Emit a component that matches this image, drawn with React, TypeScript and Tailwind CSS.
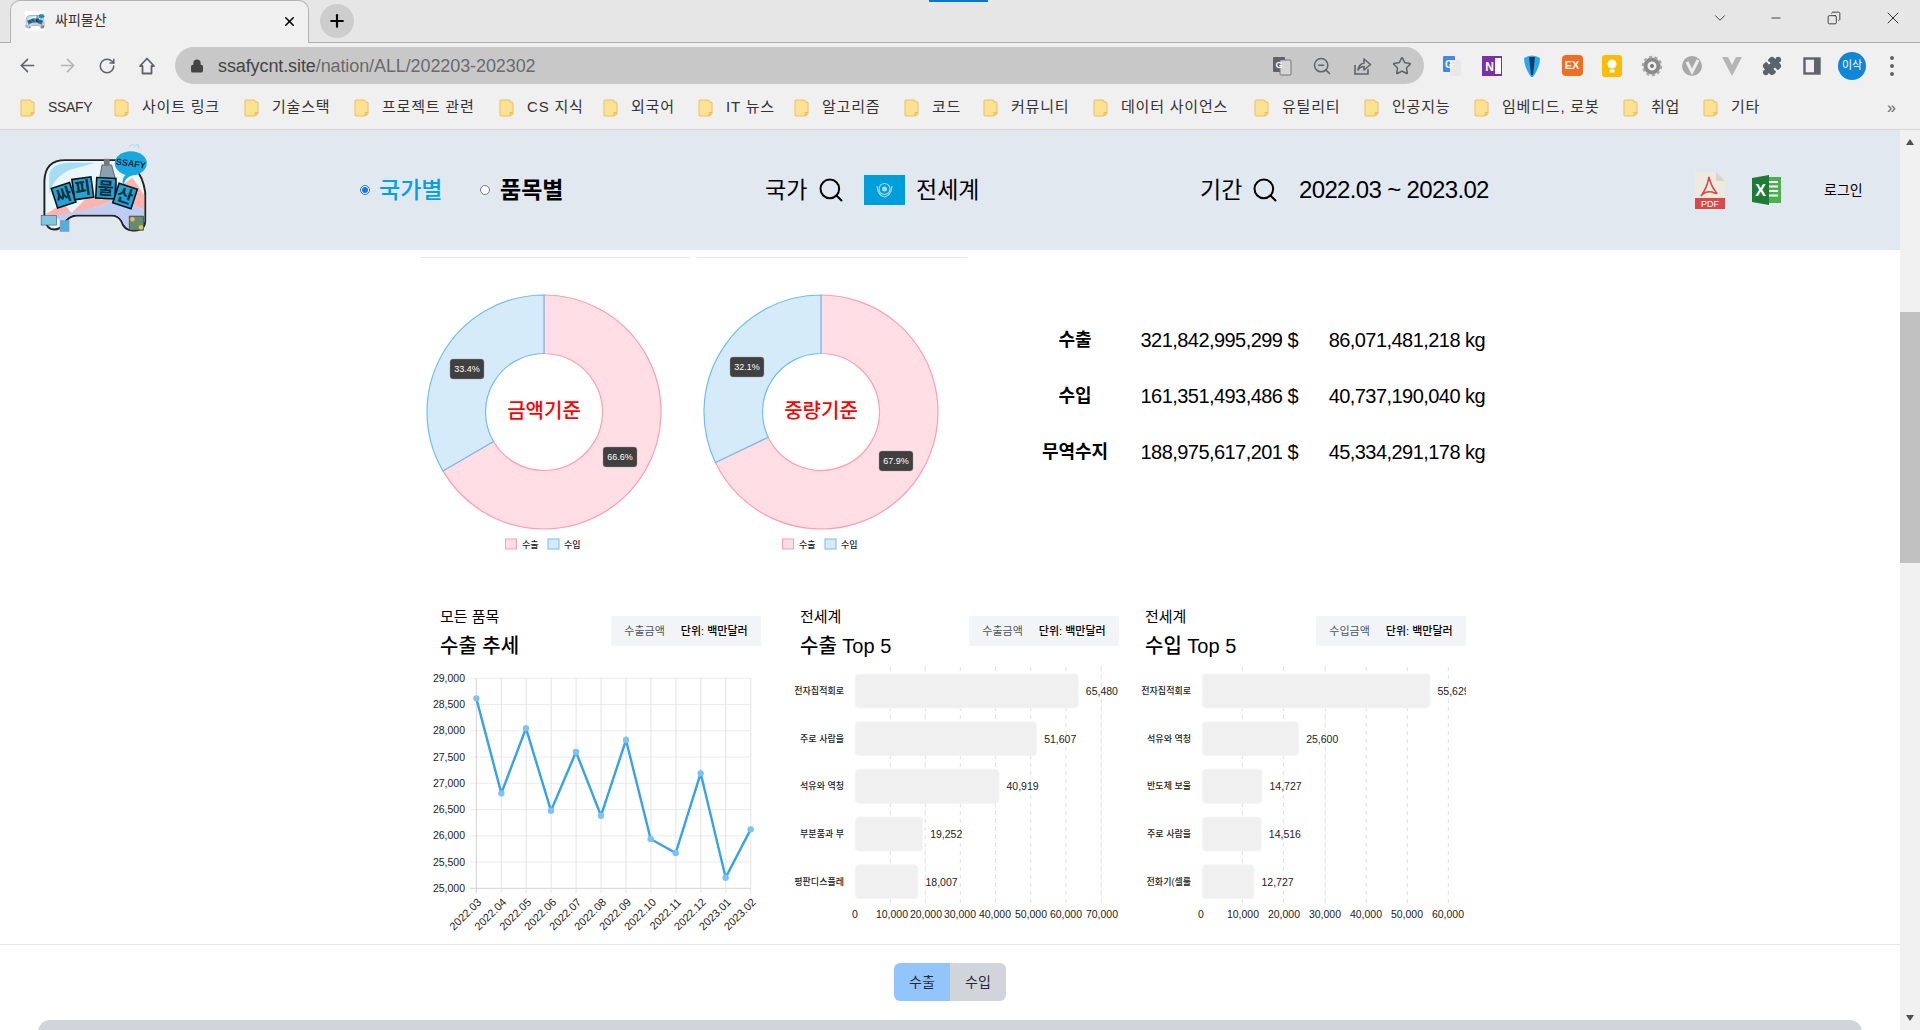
import React from "react";
import { ArrowLeft, ArrowRight, RotateCw, Lock, ZoomOut, Star, Puzzle, Search, Plus, X, ChevronDown, Minus, Copy } from "lucide-react";

const Logo = ({ className }: { className: string }) => (
  <svg viewBox="50 20 350 290" className={className}>
    <path d="M70 240 V135 Q72 70 135 70 H290 Q370 72 385 170 V260 Q385 290 345 290 Q320 290 310 260 Q300 243 280 243 H170 Q145 245 130 270 Q115 292 90 285 Q70 275 70 240 Z" fill="#eaf6fb" stroke="#222" strokeWidth="6" />
    <path d="M85 110 Q100 80 140 78 H230 L150 100 Q95 125 85 180 Z" fill="#a5def2" />
    <path d="M72 240 L130 205 L155 235 L210 180 L250 195 L345 125 L382 180 V225 L300 190 L240 215 L150 240 L100 245 Z" fill="#fbb4b0" />
    <path d="M100 245 L150 235 L240 215 L300 190 L382 225 V262 Q380 285 345 285 Q325 285 312 258 Q300 240 280 240 H170 Q145 240 128 265 Z" fill="#bfcdf2" />
    <path d="M240 140 L250 85 H280 L295 140 V185 H240 Z" fill="#8ca0b4" stroke="#333" strokeWidth="2" />
    <rect x="256" y="66" width="18" height="20" fill="#777" />
    <ellipse cx="340" cy="80" rx="50" ry="38" fill="#19a7df" />
    <path d="M335 108 Q305 125 318 150 Q318 125 350 115 Z" fill="#19a7df" />
    <text x="340" y="90" fontSize="28" fontWeight="700" fill="#123" textAnchor="middle" transform="rotate(8 340 80)">SSAFY</text>
    <path d="M335 30 L345 18 L352 28 L362 20 L366 34" fill="none" stroke="#9fd8ee" strokeWidth="3" />
    {[["싸", 130, 180, -18], ["피", 190, 158, -8], ["물", 262, 158, 3], ["산", 322, 182, 18]].map(([t, x, y, r]) => (
      <g key={t as string} transform={`rotate(${r} ${x} ${y})`}>
        <rect x={(x as number) - 30} y={(y as number) - 32} width="60" height="64" fill="#1ea5d8" stroke="#111" strokeWidth="5" />
        <text x={x as number} y={(y as number) + 19} fontSize="54" fontWeight="700" textAnchor="middle" fill="#0b2a3a">{t}</text>
      </g>
    ))}
    <rect x="60" y="243" width="48" height="30" fill="#7fc8e0" stroke="#557" strokeWidth="2" />
    <rect x="118" y="258" width="30" height="36" fill="#5fa8d8" />
    <rect x="335" y="245" width="45" height="44" fill="#6a8a70" stroke="#333" strokeWidth="2" />
    <circle cx="345" cy="255" r="7" fill="#e6c04a" />
    <circle cx="372" cy="280" r="7" fill="#e6c04a" />
  </svg>
);

const bookmarks: [string, string][] = [
  ["SSAFY", "w-[94px]"],
  ["사이트 링크", "w-[130px]"],
  ["기술스택", "w-[110px]"],
  ["프로젝트 관련", "w-[145px]"],
  ["CS 지식", "w-[104px]"],
  ["외국어", "w-[95px]"],
  ["IT 뉴스", "w-[96px]"],
  ["알고리즘", "w-[110px]"],
  ["코드", "w-[79px]"],
  ["커뮤니티", "w-[110px]"],
  ["데이터 사이언스", "w-[161px]"],
  ["유틸리티", "w-[110px]"],
  ["인공지능", "w-[110px]"],
  ["임베디드, 로봇", "w-[149px]"],
  ["취업", "w-[80px]"],
  ["기타", "w-[80px]"],
];

const Folder = () => (
  <svg width="15" height="18" viewBox="0 0 15 18" className="shrink-0">
    <path d="M1 2 Q1 1 2 1 H10 Q11 1 11 2 V3 H13 Q14 3 14 4 V15 L11 17 H2 Q1 17 1 16 Z" fill="#fde293" stroke="#eabf5a" />
    <path d="M11 17 V13.5 H14" fill="#f6cf68" stroke="#eabf5a" />
  </svg>
);

const Ext = ({ children }: { children: React.ReactNode }) => (
  <div className="w-10 h-8 flex items-center justify-center shrink-0">{children}</div>
);

const BrowserChrome = () => (
  <div className="shrink-0 h-[130px] border-b border-[#d8d8d8] bg-[#f0f0f0]">
    <div className="h-[43px] bg-[#e6e6e6] border-b border-[#aeaeae] flex relative">
      <div className="absolute top-0 left-[929px] w-[59px] h-[2px] bg-[#0078d7]" />
      <div className="ml-[10px] w-[299px] h-[43px] bg-[#f0f0f0] border border-b-0 border-[#b4b4b4] rounded-t-[10px] flex items-center pl-[14px] pr-[11px] pb-[2px]">
        <Logo className="w-5 h-5 bg-white shrink-0" />
        <span className="ml-[10px] text-[14px] text-[#333] flex-1 -translate-y-px">싸피물산</span>
        <X size={15} strokeWidth={2.5} className="text-black" />
      </div>
      <div className="ml-[11px] mt-[4px] w-[34px] h-[34px] rounded-full bg-[#cdcdcd] flex items-center justify-center">
        <Plus size={20} strokeWidth={2.6} className="text-black" />
      </div>
      <div className="ml-auto flex items-center h-[36px] pr-[17px] text-[#222]">
        <ChevronDown size={18} strokeWidth={1.1} className="mr-[40px]" />
        <Minus size={14} strokeWidth={1.4} className="mr-[44px]" />
        <Copy size={14} strokeWidth={1.4} className="mr-[42px] scale-x-[-1]" />
        <X size={20} strokeWidth={1.1} />
      </div>
    </div>
    <div className="h-[45px] flex items-center pl-[7px] text-[#5f6368]">
      <Ext><ArrowLeft size={21} strokeWidth={1.8} /></Ext>
      <Ext><ArrowRight size={21} strokeWidth={1.8} className="text-[#b4b4b4]" /></Ext>
      <Ext><RotateCw size={18} strokeWidth={2} /></Ext>
      <Ext>
        <svg width="20" height="20" viewBox="0 0 20 20"><path d="M10 2.5 L3 10 H5.5 V17.5 H14.5 V10 H17 Z" fill="none" stroke="#5f6368" strokeWidth="1.8" strokeLinejoin="round" /></svg>
      </Ext>
      <div className="ml-[8px] w-[1249px] h-[37px] rounded-full bg-[#c8c8c8] flex items-center pl-[15px]">
        <Lock size={14} strokeWidth={2.5} className="text-[#444]" fill="#444" />
        <span className="ml-[14px] text-[18px] tracking-[-0.1px] text-[#444] translate-y-px">ssafycnt.site<span className="text-[#6a6a6a]">/nation/ALL/202203-202302</span></span>
        <div className="ml-auto mr-[2px] flex items-center text-[#5f6368]">
          <Ext>
            <svg width="20" height="20" viewBox="0 0 20 20"><rect x="1" y="1" width="12" height="15" rx="1" fill="#5f6368" /><rect x="8" y="4" width="11" height="15" rx="1" fill="#d5d5d5" stroke="#777" /><text x="7" y="12" fontSize="9" fontWeight="700" fill="#fff" textAnchor="middle">G</text></svg>
          </Ext>
          <Ext><ZoomOut size={20} strokeWidth={1.8} /></Ext>
          <Ext>
            <svg width="20" height="20" viewBox="0 0 20 20"><path d="M3 9 V18 H16 V13" fill="none" stroke="#5f6368" strokeWidth="1.6" /><path d="M6 14 Q7 8 12 7 V3 L18.5 8.5 L12 14 V10.5 Q8 10.5 6 14 Z" fill="none" stroke="#5f6368" strokeWidth="1.6" strokeLinejoin="round" /></svg>
          </Ext>
          <Ext><Star size={20} strokeWidth={1.8} /></Ext>
        </div>
      </div>
      <div className="ml-[8px] flex items-center">
        <Ext>
          <svg width="20" height="22" viewBox="0 0 20 22"><rect x="1" y="1" width="12" height="16" rx="1" fill="#4285f4" /><rect x="8" y="5" width="11" height="16" rx="1" fill="#e8e8e8" /><text x="7" y="13" fontSize="10" fontWeight="700" fill="#fff" textAnchor="middle">G</text></svg>
        </Ext>
        <Ext>
          <svg width="20" height="20" viewBox="0 0 20 20"><rect width="20" height="20" fill="#7b2fa8" /><rect x="13" y="2" width="6" height="16" fill="#fff" /><text x="7.5" y="15" fontSize="12" fontWeight="700" fill="#fff" textAnchor="middle">N</text></svg>
        </Ext>
        <Ext>
          <svg width="20" height="24" viewBox="0 0 20 24"><path d="M2 4 Q10 -1 18 4 Q18 13 11 23 H9 Q2 13 2 4 Z" fill="#29a9f0" /><path d="M7 3 L13 3 L11 21 H9 Z" fill="#0b3d6b" /></svg>
        </Ext>
        <Ext>
          <div className="w-[21px] h-[21px] rounded-[4px] bg-[#f26d21] text-white text-[11px] font-bold flex items-center justify-center">EX</div>
        </Ext>
        <Ext>
          <svg width="20" height="22" viewBox="0 0 20 22"><rect width="20" height="22" rx="3" fill="#fbbc04" /><circle cx="10" cy="9" r="4.5" fill="#fff" /><rect x="7.5" y="14.5" width="5" height="3" fill="#fff" /></svg>
        </Ext>
        <Ext>
          <svg width="22" height="22" viewBox="0 0 22 22"><circle cx="11" cy="11" r="6.5" fill="none" stroke="#8a8a8a" strokeWidth="4" /><circle cx="11" cy="11" r="9" fill="none" stroke="#a8a8a8" strokeWidth="2.4" strokeDasharray="3 2.6" /><circle cx="11" cy="11" r="2" fill="#777" /></svg>
        </Ext>
        <Ext>
          <svg width="22" height="22" viewBox="0 0 22 22"><circle cx="11" cy="11" r="10" fill="#a8a8a8" /><path d="M6 7 L11 17 L17 5" fill="none" stroke="#eee" strokeWidth="3" /></svg>
        </Ext>
        <Ext>
          <svg width="22" height="22" viewBox="0 0 22 22"><path d="M1 2 H21 L11 21 Z" fill="#b5b5b5" /><path d="M7 2 H15 L11 10 Z" fill="#f0f0f0" /></svg>
        </Ext>
        <Ext><Puzzle size={20} strokeWidth={2} fill="#5f6368" /></Ext>
        <Ext>
          <svg width="18" height="18" viewBox="0 0 18 18"><rect x="1.5" y="1.5" width="15" height="15" fill="#f0f0f0" stroke="#5f6368" strokeWidth="2.4" /><rect x="11" y="1" width="6" height="16" fill="#5f6368" /></svg>
        </Ext>
        <Ext>
          <div className="w-[28px] h-[28px] rounded-full bg-[#0f86d6] text-white text-[11px] flex items-center justify-center">이삭</div>
        </Ext>
        <Ext>
          <div className="flex flex-col gap-[4px]">
            <div className="w-[4px] h-[4px] rounded-full bg-[#5f6368]" />
            <div className="w-[4px] h-[4px] rounded-full bg-[#5f6368]" />
            <div className="w-[4px] h-[4px] rounded-full bg-[#5f6368]" />
          </div>
        </Ext>
      </div>
    </div>
    <div className="h-[41px] flex items-center pl-[20px] pb-[2px] relative">
      {bookmarks.map(([b, w]) => (
        <div key={b} className={`flex items-center shrink-0 ${w}`}>
          <Folder />
          <span className={`ml-[13px] text-[#333] whitespace-nowrap ${b === "SSAFY" ? "text-[14px] tracking-[-0.3px]" : "text-[15px] tracking-[0.8px]"}`}>{b}</span>
        </div>
      ))}
      <span className="ml-auto mr-[24px] text-[16px] text-[#666]">»</span>
    </div>
  </div>
);

const Radio = ({ on }: { on?: boolean }) =>
  on ? (
    <span className="w-[10px] h-[10px] rounded-full border border-[#1a73e8] bg-white flex items-center justify-center shrink-0">
      <span className="block w-[6px] h-[6px] rounded-full bg-[#1a73e8]" />
    </span>
  ) : (
    <span className="block w-[10px] h-[10px] rounded-full border border-[#777] bg-white shrink-0" />
  );

const SiteHeader = () => (
  <header className="shrink-0 h-[120px] bg-[#e2e8f0] flex items-center text-black pr-[20px]">
    <Logo className="ml-[38px] w-[112px] h-[93px] shrink-0 blur-[0.6px]" />
    <span className="ml-[210px] shrink-0"><Radio on /></span>
    <span className="ml-[9px] text-[23px] font-medium text-[#00a0e9] w-[62px] whitespace-nowrap">국가별</span>
    <span className="ml-[39px] shrink-0"><Radio /></span>
    <span className="ml-[10px] text-[23px] font-bold w-[62px] whitespace-nowrap">품목별</span>
    <span className="ml-[203px] text-[23px] w-[44px] whitespace-nowrap">국가</span>
    <Search size={28} strokeWidth={1.7} className="ml-[8px] shrink-0" />
    <svg width="41" height="30" viewBox="0 0 41 30" className="ml-[19px] shrink-0">
      <rect width="41" height="30" fill="#009edb" />
      <circle cx="20.5" cy="14" r="5.5" fill="none" stroke="#a9dcf2" strokeWidth="1.2" />
      <circle cx="20.5" cy="14" r="2.5" fill="#a9dcf2" />
      <path d="M13 11 Q14 21 20.5 22 Q27 21 28 11" fill="none" stroke="#a9dcf2" strokeWidth="1.2" />
    </svg>
    <span className="ml-[11px] text-[23px] w-[62px] whitespace-nowrap">전세계</span>
    <span className="ml-[222px] text-[23px] w-[44px] whitespace-nowrap">기간</span>
    <Search size={28} strokeWidth={1.7} className="ml-[7px] shrink-0" />
    <span className="ml-[20px] text-[24px] tracking-[-0.65px] w-[192px] whitespace-nowrap">2022.03 ~ 2023.02</span>
    <svg width="30" height="37" viewBox="0 0 30 37" className="ml-[204px] shrink-0">
      <path d="M0 0 H21 L30 9 V37 H0 Z" fill="#efe9de" />
      <path d="M21 0 V9 H30 Z" fill="#d8d4cc" />
      <rect y="26" width="30" height="11" fill="#d9474f" />
      <text x="15" y="35" fontSize="9" fill="#fff" textAnchor="middle">PDF</text>
      <path d="M14 5 Q16 14 21 20 Q24 23 17 20 Q10 19 6 24 Q12 16 14 5 Z" fill="none" stroke="#d9474f" strokeWidth="1.5" />
    </svg>
    <svg width="29" height="30" viewBox="0 0 29 30" className="ml-[27px] shrink-0">
      <path d="M14 2 H29 V28 H14 Z" fill="#4caf50" />
      <path d="M17 7 H26 M17 11.5 H26 M17 16 H26 M17 20.5 H26" stroke="#fff" strokeWidth="2.2" />
      <path d="M0 3 L17 0 V30 L0 27 Z" fill="#1f7a38" />
      <text x="8.5" y="21" fontSize="16" fontWeight="700" fill="#fff" textAnchor="middle">X</text>
    </svg>
    <span className="ml-[43px] text-[14px] whitespace-nowrap">로그인</span>
  </header>
);

const polar = (cx: number, cy: number, r: number, a: number): [number, number] => [cx + r * Math.sin(a), cy - r * Math.cos(a)];
const sector = (cx: number, cy: number, R: number, r: number, a0: number, a1: number) => {
  const large = a1 - a0 > Math.PI ? 1 : 0;
  const [x0, y0] = polar(cx, cy, R, a0);
  const [x1, y1] = polar(cx, cy, R, a1);
  const [x2, y2] = polar(cx, cy, r, a1);
  const [x3, y3] = polar(cx, cy, r, a0);
  return `M${x0} ${y0} A${R} ${R} 0 ${large} 1 ${x1} ${y1} L${x2} ${y2} A${r} ${r} 0 ${large} 0 ${x3} ${y3} Z`;
};

const Donut = ({ frac, title, a, b }: { frac: number; title: string; a: { t: string; x: number; y: number }; b: { t: string; x: number; y: number } }) => {
  const cx = 124;
  const cy = 154;
  const end = frac * Math.PI * 2;
  const Tag = ({ t, x, y }: { t: string; x: number; y: number }) => (
    <g>
      <rect x={x} y={y} width="34" height="20" rx="3" fill="#404040" stroke="#999" strokeWidth="0.4" />
      <text x={x + 17} y={y + 13} fontSize="9" fill="#fff" textAnchor="middle">{t}</text>
    </g>
  );
  return (
    <svg width="270" height="302" viewBox="0 0 270 302" className="shrink-0">
      <path d={sector(cx, cy, 117, 58.5, 0, end)} fill="#ffdee5" stroke="#ff9db2" strokeWidth="1.2" />
      <path d={sector(cx, cy, 117, 58.5, end, Math.PI * 2 - 0.0001)} fill="#d6ebfa" stroke="#72bdf0" strokeWidth="1.2" />
      <text x={cx} y={cy + 6} fontSize="20" fontWeight="500" fill="#ff0000" textAnchor="middle">{title}</text>
      <Tag {...a} />
      <Tag {...b} />
      <rect x="85.5" y="281" width="11" height="10" fill="#ffdee5" stroke="#ff9db2" />
      <text x="102" y="290" fontSize="9" fontWeight="500" fill="#222">수출</text>
      <rect x="128" y="281" width="11" height="10" fill="#d6ebfa" stroke="#72bdf0" />
      <text x="144" y="290" fontSize="9" fontWeight="500" fill="#222">수입</text>
    </svg>
  );
};

const stats = [
  ["수출", "321,842,995,299 $", "86,071,481,218 kg"],
  ["수입", "161,351,493,486 $", "40,737,190,040 kg"],
  ["무역수지", "188,975,617,201 $", "45,334,291,178 kg"],
];

const months = ["2022.03", "2022.04", "2022.05", "2022.06", "2022.07", "2022.08", "2022.09", "2022.10", "2022.11", "2022.12", "2023.01", "2023.02"];
const linePts = [[169, 325], [244, 610], [318, 415], [393, 662], [468, 486], [543, 677], [618, 450], [692, 747], [767, 789], [842, 550], [917, 863], [992, 718]].map(([x, y]) => [x / 3, y / 3 - 76]);
const yTicks = ["29,000", "28,500", "28,000", "27,500", "27,000", "26,500", "26,000", "25,500", "25,000"];

const LineChart = () => (
  <svg width="360" height="278" viewBox="0 0 360 278" className="block">
    {yTicks.map((t, i) => {
      const y = 12.3 + i * 26.25;
      return (
        <g key={t}>
          <line x1="50" x2="330.7" y1={y} y2={y} stroke={i === 8 ? "#d4d4d4" : "#ececec"} />
          <text x="45" y={y + 3.5} fontSize="10.5" fill="#222" textAnchor="end">{t}</text>
        </g>
      );
    })}
    {months.map((m, i) => {
      const x = 56.3 + i * 24.95;
      return (
        <g key={m}>
          <line x1={x} x2={x} y1="12.3" y2="227" stroke={i === 0 ? "#d0d0d0" : "#e4e4e4"} />
          <text x={x + 3} y="238" fontSize="11" fill="#222" textAnchor="end" transform={`rotate(-45 ${x + 3} 234)`}>{m}</text>
        </g>
      );
    })}
    <polyline points={linePts.map((p) => p.join(",")).join(" ")} fill="none" stroke="#36a2eb" strokeWidth="2.4" />
    {linePts.map((p, i) => (
      <circle key={i} cx={p[0]} cy={p[1]} r="3.2" fill="#7cc2f2" />
    ))}
  </svg>
);

type Bar = { label: string; value: string; end: number; y: number };

const BarChart = ({ bars, x0, ticks, grid, width, labelEnd }: { bars: Bar[]; x0: number; ticks: { t: string; x: number }[]; grid: number[]; width: number; labelEnd: number }) => (
  <svg width={width} height="278" viewBox={`0 0 ${width} 278`} className="block">
    {grid.map((x) => (
      <line key={x} x1={x} x2={x} y1="1" y2="237" stroke="#dedede" strokeDasharray="4 4" />
    ))}
    {bars.map((b) => (
      <g key={b.label}>
        <rect x={x0} y={b.y} width={b.end - x0} height="34" rx="4" fill="#f0f0f0" stroke="#f6f6f6" />
        <text x={labelEnd} y={b.y + 20} fontSize="9" fontWeight="500" fill="#222" textAnchor="end">{b.label}</text>
        <text x={b.end + 7.5} y={b.y + 21} fontSize="10.5" fill="#222">{b.value}</text>
      </g>
    ))}
    {ticks.map((t) => (
      <text key={t.t} x={t.x} y="252" fontSize="10.5" fill="#222" textAnchor="middle">{t.t}</text>
    ))}
  </svg>
);

const ChartHead = ({ top, title, chip, pl, pr }: { top: string; title: string; chip: string; pl: string; pr: string }) => (
  <div className={`h-[60px] flex justify-between items-start ${pl} ${pr}`}>
    <div>
      <div className="text-[15px] leading-[22px] text-black">{top}</div>
      <div className="mt-[3px] text-[20px] leading-[30px] font-medium text-black whitespace-nowrap">{title}</div>
    </div>
    <div className="mt-[10px] w-[150px] h-[30px] bg-[#f3f4f6] flex items-center justify-center gap-[16px] text-[11px] whitespace-nowrap">
      <span className="text-[#4b5563]">{chip}</span>
      <span className="text-black font-medium">단위: 백만달러</span>
    </div>
  </div>
);

const exportsBars: Bar[] = [
  { label: "전자집적회로", value: "65,480", end: 298.3, y: 8 },
  { label: "주로 사람을", value: "51,607", end: 256.7, y: 55.7 },
  { label: "석유와 역청", value: "40,919", end: 219, y: 103.3 },
  { label: "부분품과 부", value: "19,252", end: 142.7, y: 151 },
  { label: "평판디스플레", value: "18,007", end: 138, y: 198.7 },
];
const importsBars: Bar[] = [
  { label: "전자집적회로", value: "55,629", end: 300, y: 8 },
  { label: "석유와 역청", value: "25,600", end: 168.7, y: 55.7 },
  { label: "반도체 보울", value: "14,727", end: 132, y: 103.3 },
  { label: "주로 사람을", value: "14,516", end: 131.3, y: 151 },
  { label: "전화기(셀룰", value: "12,727", end: 124, y: 198.7 },
];

export default function App() {
  return (
    <div className="w-[1920px] h-[1030px] overflow-hidden flex flex-col bg-white [font-family:'Liberation_Sans','Noto_Sans_CJK_KR',sans-serif]">
      <BrowserChrome />
      <div className="flex-1 min-h-0 flex flex-col relative">
        <div className="absolute right-0 top-0 bottom-0 w-[20px] bg-[#f1f1f1] flex flex-col items-center">
          <div className="mt-[9px] w-0 h-0 border-x-[4px] border-x-transparent border-b-[6px] border-b-[#505050]" />
          <div className="mt-[167px] w-full h-[251px] bg-[#c1c1c1]" />
          <div className="mt-auto mb-[9px] w-0 h-0 border-x-[4px] border-x-transparent border-t-[6px] border-t-[#505050]" />
        </div>
        <SiteHeader />
        <main className="w-[1900px] flex-1 min-h-0 flex flex-col">
          <div className="shrink-0 pt-[7px] pl-[420px] flex gap-[7px]">
            <div className="w-[270px] h-px bg-[#e5e7eb]" />
            <div className="w-[270px] h-px bg-[#e5e7eb]" />
          </div>
          <div className="shrink-0 pl-[420px] flex gap-[7px]">
            <Donut frac={0.666} title="금액기준" a={{ t: "33.4%", x: 30, y: 101 }} b={{ t: "66.6%", x: 183, y: 189 }} />
            <Donut frac={0.679} title="중량기준" a={{ t: "32.1%", x: 33, y: 99 }} b={{ t: "67.9%", x: 182, y: 193 }} />
            <div className="ml-[66px] mt-[68px] flex flex-col gap-[28px] text-black">
              {stats.map(([a, b, c]) => (
                <div key={a} className="h-[28px] flex items-center text-[20px] tracking-[-0.55px] whitespace-nowrap">
                  <span className="w-[70px] text-center text-[18px] tracking-normal font-bold">{a}</span>
                  <span className="ml-[30px] w-[158px] text-right">{b}</span>
                  <span className="ml-[12px] w-[175px] text-right">{c}</span>
                </div>
              ))}
            </div>
          </div>
          <div className="shrink-0 mt-[46px] pl-[420px] flex">
            <div className="w-[360px]">
              <ChartHead top="모든 품목" title="수출 추세" chip="수출금액" pl="pl-[20px]" pr="pr-[19px]" />
              <LineChart />
            </div>
            <div className="w-[350px]">
              <ChartHead top="전세계" title="수출 Top 5" chip="수출금액" pl="pl-[20px]" pr="pr-[11px]" />
              <BarChart
                bars={exportsBars}
                x0={75.3}
                width={350}
                labelEnd={64}
                grid={[110.3, 145.3, 180.3, 215.3, 250.7, 286, 321.3]}
                ticks={[{ t: "0", x: 75 }, { t: "10,000", x: 112 }, { t: "20,000", x: 146 }, { t: "30,000", x: 180 }, { t: "40,000", x: 215 }, { t: "50,000", x: 251 }, { t: "60,000", x: 286 }, { t: "70,000", x: 322 }]}
              />
            </div>
            <div className="w-[350px]">
              <ChartHead top="전세계" title="수입 Top 5" chip="수입금액" pl="pl-[15px]" pr="pr-[14px]" />
              <BarChart
                bars={importsBars}
                x0={72.3}
                width={336}
                labelEnd={61}
                grid={[112.3, 153.3, 195.3, 236.3, 277.3, 318.3]}
                ticks={[{ t: "0", x: 71 }, { t: "10,000", x: 113 }, { t: "20,000", x: 154 }, { t: "30,000", x: 195 }, { t: "40,000", x: 236 }, { t: "50,000", x: 277 }, { t: "60,000", x: 318 }]}
              />
            </div>
          </div>
          <div className="shrink-0 h-px bg-[#e5e7eb]" />
          <div className="shrink-0 mt-[18px] ml-[894px] flex w-[112px] h-[38px] rounded-[6px] overflow-hidden text-[14px] text-[#1f2937]">
            <div className="w-[56px] bg-[#93c5fd] flex items-center justify-center">수출</div>
            <div className="w-[56px] bg-[#d1d5db] flex items-center justify-center">수입</div>
          </div>
          <div className="shrink-0 mt-[19px] mx-[38px] h-[40px] rounded-t-[12px] bg-[#d1d5db]" />
        </main>
      </div>
    </div>
  );
}
